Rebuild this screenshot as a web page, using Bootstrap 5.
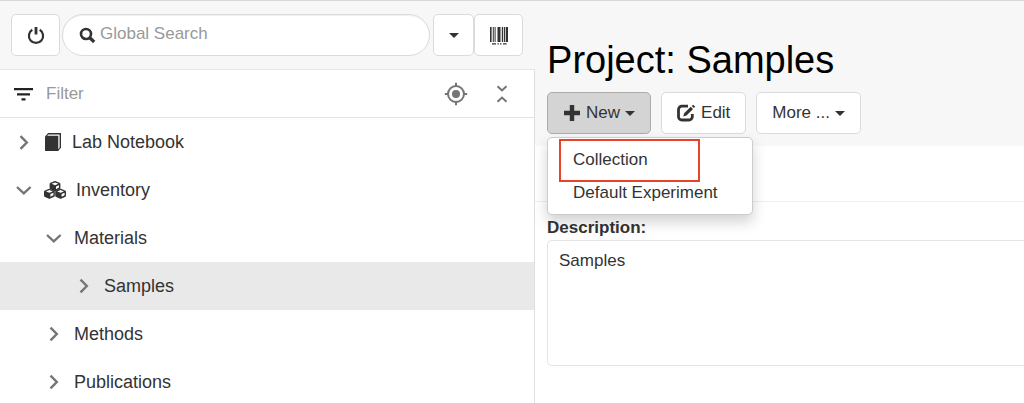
<!DOCTYPE html>
<html lang="en">
<head>
<meta charset="utf-8">
<meta name="viewport" content="width=device-width, initial-scale=1">
<title>Project: Samples</title>
<link rel="stylesheet" href="https://cdn.jsdelivr.net/npm/bootstrap@5.3.0/dist/css/bootstrap.min.css">
<style>
  body { font-family: "Liberation Sans", Arial, sans-serif; font-size: 17px; line-height: 24px; color: #333; border-top: 1px solid #d8d8d8; }
  .side { flex: 0 0 52.25%; }
  .bar, .head { background: #f7f7f7; }
  .bar { padding: 13px 12px 13px 11px; border-bottom: 1px solid #e7e7e7; }
  .tool { --bs-btn-color: #333; --bs-btn-bg: #fff; --bs-btn-border-color: #dbdbdb; --bs-btn-hover-bg: #ebebeb; --bs-btn-hover-color: #333; --bs-btn-hover-border-color: #adadad; --bs-btn-active-bg: #d4d4d4; --bs-btn-active-color: #333; --bs-btn-active-border-color: #acacac; --bs-btn-font-size: 17px; --bs-btn-line-height: 26px; --bs-btn-padding-x: 15px; --bs-btn-padding-y: 7px; --bs-btn-border-radius: 5px; height: 42px; }
  .tool-sq { width: 49px; --bs-btn-padding-x: 0; --bs-btn-line-height: 22px; }
  .tool-drop { width: 41px; --bs-btn-padding-x: 0; }
  .tool.dropdown-toggle::after { margin-left: 5px; vertical-align: 2px; border-top-width: 5px; border-right-width: 5px; border-left-width: 5px; }
  .tool-drop.dropdown-toggle::after { margin-left: 0; }
  .tools { gap: 10px; }
  .icon-gap { gap: 5px; }
  .search { height: 42px; border: 1px solid #dbdbdb; border-radius: 21px; box-shadow: inset 0 1px 1px rgba(0,0,0,.06); padding: 0 16px 2px; margin: 0 3px 0 2px; }
  .plain { border: 0; outline: 0; background: none; padding: 0; min-width: 0; color: #333; }
  .plain::placeholder { color: #999; opacity: 1; }
  .side-body { border-right: 1px solid #dfdfdf; }
  .filter { height: 48px; padding: 0 22px 0 14px; border-bottom: 1px solid #e4e4e4; }
  .tree-row { height: 48px; font-size: 18px; padding-left: 14px; color: #333; text-decoration: none; }
  .tree-row.lv2 { padding-left: 44px; }
  .tree-row.lv3 { padding-left: 74px; }
  .tree-row.current { background: #e9e9e9; }
  .chev { flex: none; margin-right: 10px; }
  .node-name { margin-left: 10px; }
  .head { padding: 37px 12px 12px; }
  .title { font-size: 38px; line-height: 44px; color: #000; margin-bottom: 10px; }
  .new-menu { --bs-dropdown-min-width: 206px; --bs-dropdown-padding-y: 5px; --bs-dropdown-padding-x: 0; --bs-dropdown-font-size: 17px; --bs-dropdown-item-padding-x: 25px; --bs-dropdown-item-padding-y: 4px; --bs-dropdown-border-color: #ccc; --bs-dropdown-border-radius: 5px; --bs-dropdown-link-color: #333; top: 100%; left: 0; margin-top: 3px; box-shadow: 0 7px 14px rgba(0,0,0,.18); }
  .new-menu .dropdown-item { line-height: 25px; }
  .marked { position: relative; }
  .marked::after { content: ""; position: absolute; inset: -4px 52px -6px 11px; border: 2px solid #e8432a; pointer-events: none; }
  .rule { height: 56px; border-bottom: 1px solid #eee; }
  .details { padding: 14px 0 12px 12px; }
  .desc { height: 126px; border: 1px solid #e4e4e4; border-right: 0; border-radius: 5px 0 0 5px; padding: 8px 11px; resize: none; color: #333; outline: 0; }
</style>
</head>
<body>
<div class="d-flex min-vh-100">
  <aside class="side d-flex flex-column">
    <div class="bar d-flex align-items-center">
      <button class="btn tool tool-sq" type="button" aria-label="Log out"><svg width="18" height="20" viewBox="0 0 18 20" fill="none" stroke="#333" stroke-width="2.2"><path d="M5.3 3.8a7.1 7.1 0 1 0 7.4 0"/><path d="M9 1v7.5" stroke-width="2.8"/></svg></button>
      <div class="search bg-white flex-grow-1 d-flex align-items-center">
        <svg class="me-1" width="17" height="18" viewBox="0 0 17 18" fill="none" stroke="#333"><circle cx="7" cy="9" r="5" stroke-width="2.6"/><path d="m11 13 4.2 4" stroke-width="3.2"/></svg>
        <input class="plain flex-grow-1" type="text" placeholder="Global Search" aria-label="Global Search">
      </div>
      <button class="btn tool tool-drop dropdown-toggle" type="button" aria-label="Search domain"></button>
      <button class="btn tool tool-sq" type="button" aria-label="Scan barcode"><svg width="20" height="20" viewBox="0 0 20 20" fill="#333"><path d="M1 1h1.6v15H1zM3.8 1h1v15h-1zM5.6 1h1v15h-1zM8.5 1h3v15h-3zM12.8 1h1.4v15h-1.4zM15 1h1v15h-1zM16.7 1H19v15h-2.3zM3 17.2h4v1.400H3zM8.400 17.200h1.400v1.400H8.400zM11 17.200h1.400v1.400H11zM14 17.200h3.600v1.400H14z"/></svg></button>
    </div>
    <div class="side-body bg-white flex-grow-1">
      <div class="filter d-flex align-items-center">
        <svg width="20" height="14" viewBox="0 0 20 14" fill="#222"><path d="M0 1h19v2.200H0zM3 6.200h13v2.200H3zM7.500 11.200h4v2.200h-4z"/></svg>
        <input class="plain flex-grow-1 ms-2 ps-1" type="text" placeholder="Filter" aria-label="Filter">
        <button class="plain d-flex me-4" type="button" aria-label="Scroll to selected"><svg width="24" height="24" viewBox="0 0 24 24" fill="none" stroke="#757575" stroke-width="2"><circle cx="12" cy="12" r="8"/><circle cx="12" cy="12" r="4" fill="#757575" stroke="none"/><path d="M12 .8V4M12 20v3.200M.8 12H4M20 12h3.200"/></svg></button>
        <button class="plain d-flex" type="button" aria-label="Collapse all"><svg width="20" height="20" viewBox="0 0 20 20" fill="none" stroke="#757575" stroke-width="2"><path d="m5.500 2.300 4.500 4.200 4.500-4.200M5.500 17.700l4.500-4.200 4.500 4.200"/></svg></button>
      </div>
      <nav aria-label="Lab contents">
        <a class="tree-row d-flex align-items-center" href="#"><svg class="chev" width="20" height="20" viewBox="0 0 20 20" fill="none" stroke="#757575" stroke-width="2.4"><path d="m6.500 4.200 6.300 6.300-6.300 6.300"/></svg><svg width="18" height="18" viewBox="0 0 18 18"><path d="M4.200 0H17v14.500L14.200 18H1V3.500z" fill="#333"/><path d="M3 2.800 4.600 1.400h11v13l-1.300 1.800V2.800z" fill="#fff"/></svg><span class="node-name">Lab Notebook</span></a>
        <a class="tree-row d-flex align-items-center" href="#"><svg class="chev" width="20" height="20" viewBox="0 0 20 20" fill="none" stroke="#757575" stroke-width="2.4"><path d="m3 7 6.800 6.400L16.600 7"/></svg><svg width="22" height="18" viewBox="0 0 22 18"><defs><g id="cube"><path d="M0 3.200Q0 2.200 1 1.800L4.500.3q.9-.4 1.800 0l3.500 1.500q1 .4 1 1.400v3.600q0 1-1 1.500L6.300 10q-.9.4-1.800 0L1 8.300q-1-.5-1-1.500z" fill="#333"/><path d="m2 2.800 3.400-1.400 3.400 1.400-3.400 1.400zM6.400 5.500l3-1.300v2.400l-3 1.600z" fill="#fff"/></g></defs><use href="#cube" x="5.600" y="0"/><use href="#cube" x="0" y="7.600"/><use href="#cube" x="11.200" y="7.600"/></svg><span class="node-name">Inventory</span></a>
        <a class="tree-row lv2 d-flex align-items-center" href="#"><svg class="chev" width="20" height="20" viewBox="0 0 20 20" fill="none" stroke="#757575" stroke-width="2.4"><path d="m3 7 6.800 6.400L16.600 7"/></svg>Materials</a>
        <a class="tree-row lv3 current d-flex align-items-center" href="#" aria-current="page"><svg class="chev" width="20" height="20" viewBox="0 0 20 20" fill="none" stroke="#757575" stroke-width="2.4"><path d="m6.500 3.700 6.300 6.300-6.300 6.300"/></svg>Samples</a>
        <a class="tree-row lv2 d-flex align-items-center" href="#"><svg class="chev" width="20" height="20" viewBox="0 0 20 20" fill="none" stroke="#757575" stroke-width="2.4"><path d="m6.500 3.700 6.300 6.300-6.300 6.300"/></svg>Methods</a>
        <a class="tree-row lv2 d-flex align-items-center" href="#"><svg class="chev" width="20" height="20" viewBox="0 0 20 20" fill="none" stroke="#757575" stroke-width="2.4"><path d="m6.500 3.700 6.300 6.300-6.300 6.300"/></svg>Publications</a>
      </nav>
    </div>
  </aside>
  <main class="flex-grow-1">
    <header class="head">
      <h1 class="title fw-normal">Project: Samples</h1>
      <div class="tools d-flex">
        <div class="dropdown">
          <button class="btn tool active dropdown-toggle icon-text d-flex align-items-center" type="button" aria-expanded="true"><span class="icon-gap d-flex align-items-center"><svg width="18" height="18" viewBox="0 0 18 18" fill="#333"><path d="M6.800 1h4.400v5.800H17v4.400h-5.800V17H6.800v-5.800H1V6.800h5.800z"/></svg>New</span></button>
          <ul class="dropdown-menu new-menu show">
            <li class="marked"><a class="dropdown-item" href="#">Collection</a></li>
            <li><a class="dropdown-item" href="#">Default Experiment</a></li>
          </ul>
        </div>
        <button class="btn tool icon-gap d-flex align-items-center" type="button"><svg width="19" height="18" viewBox="0 0 19 18" fill="none" stroke="#333"><path d="M11 2.200H4.800a3.300 3.300 0 0 0-3.300 3.300v7.200A3.300 3.300 0 0 0 4.800 16H12a3.300 3.300 0 0 0 3.300-3.300V10" stroke-width="2.800"/><path d="m13.700 2.700 2.300 2.300-6.500 6.600-3.300 1 1-3.400zM16.200.8l2 2-1.300 1.300-2.200-2z" fill="#333" stroke="none"/></svg>Edit</button>
        <button class="btn tool dropdown-toggle" type="button">More ...</button>
      </div>
    </header>
    <div class="rule"></div>
    <div class="details">
      <label class="fw-bold d-block" for="description">Description:</label>
      <textarea class="desc d-block w-100" id="description" readonly>Samples</textarea>
    </div>
  </main>
</div>
<script src="https://cdn.jsdelivr.net/npm/bootstrap@5.3.0/dist/js/bootstrap.bundle.min.js"></script>
</body>
</html>
